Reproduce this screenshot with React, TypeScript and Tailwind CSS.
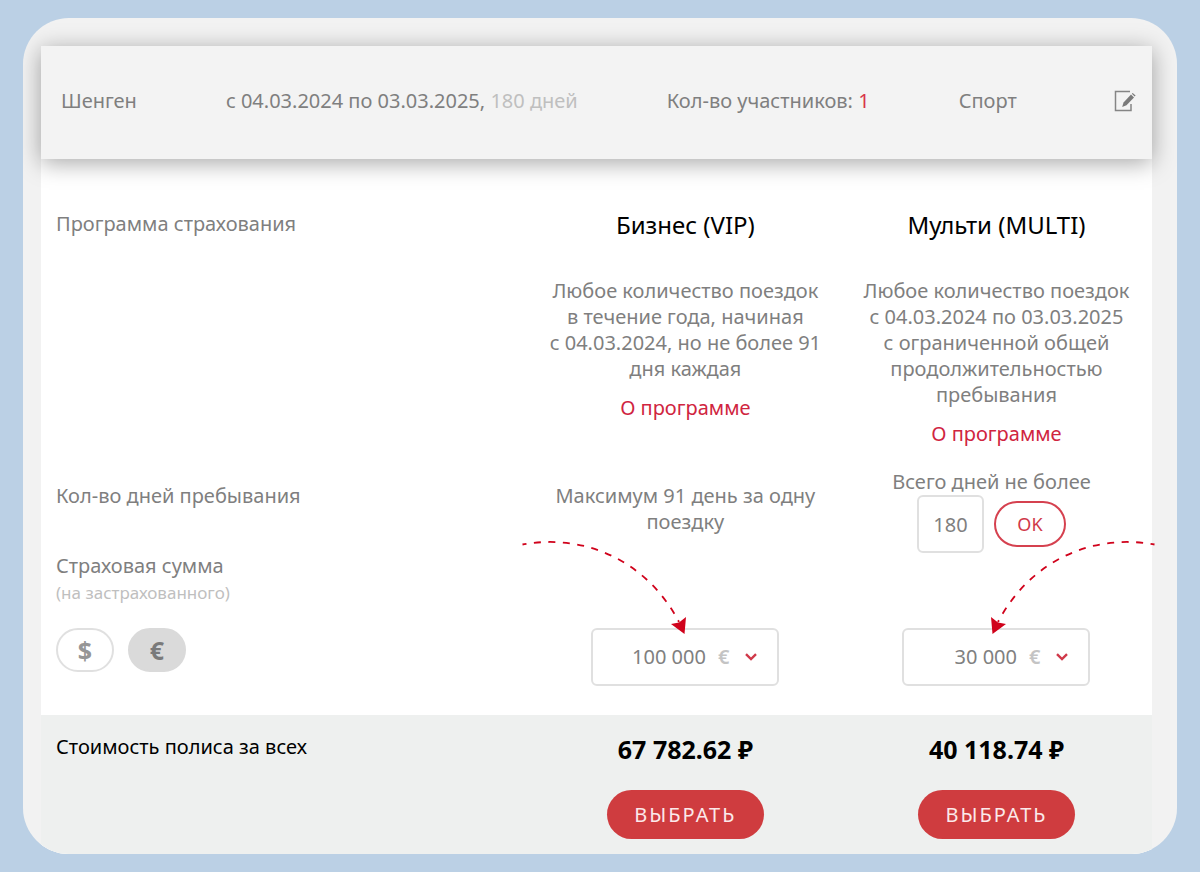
import React, { useState } from 'react';

type Currency = '$' | '€';

const CURRENCIES: Currency[] = ['$', '€'];

const EditIcon: React.FC = () => (
  <svg width="22" height="22" viewBox="0 0 22 22" fill="none" aria-hidden="true">
    <path d="M16 1.5H1.500v19h15.500V14" stroke="#858585" strokeWidth="1.500" />
    <path d="M17 4.500l3 3-7.500 7.700-4.300 1.800 1.300-4.500z" fill="#7a7a7a" />
    <path d="M17.800 3.700l.9-.8 2.900 2.700-.9 1z" fill="#7a7a7a" />
  </svg>
);

const Chevron: React.FC = () => (
  <svg width="12" height="8" viewBox="0 0 12 8" fill="none" aria-hidden="true">
    <path d="M1 1.200l5 4.800 5-4.800" stroke="#d0394a" strokeWidth="2.400" />
  </svg>
);

const ArrowRight: React.FC = () => (
  <svg width="164" height="96" viewBox="0 0 164 96" fill="none" aria-hidden="true" className="overflow-visible">
    <path d="M1.500 5.500C64 -6 126 22 158 83" stroke="#d0021b" strokeWidth="1.800" strokeDasharray="7 7.500" strokeDashoffset="3" />
    <path d="M163.500 95L150 85l8-1.500L165 78z" fill="#d0021b" />
  </svg>
);

const ArrowLeft: React.FC = () => (
  <svg width="168" height="96" viewBox="0 0 168 96" fill="none" aria-hidden="true">
    <path d="M166.500 5.500C104 -6 42 22 10 83" stroke="#d0021b" strokeWidth="1.800" strokeDasharray="7 7.500" strokeDashoffset="3" />
    <path d="M4.500 95L18 85l-8-1.500L3 78z" fill="#d0021b" />
  </svg>
);

interface SumSelectProps {
  label: string;
  currency: Currency;
  initial: string;
}

const SumSelect: React.FC<SumSelectProps> = ({ label, currency, initial }) => {
  const [value, setValue] = useState(initial);
  return (
    <div className="mx-auto flex h-[58px] w-[188px] items-center justify-end rounded-md border-2 border-[#e0e0e0] bg-white pr-5">
      <select
        aria-label={label}
        value={value}
        onChange={(e) => setValue(e.target.value)}
        className="field-sizing-content cursor-pointer appearance-none bg-transparent text-[#808080] outline-none"
      >
        <option>30 000</option>
        <option>50 000</option>
        <option>100 000</option>
      </select>
      <span className="ml-3 font-semibold text-[#c4c4c4]">{currency}</span>
      <span className="ml-4">
        <Chevron />
      </span>
    </div>
  );
};

const ChooseButton: React.FC = () => (
  <button className="mt-7 h-[49px] w-[157px] cursor-pointer rounded-full bg-[#cf3c3f] tracking-widest text-[#fbe9ea] uppercase">
    Выбрать
  </button>
);

export default function App() {
  const [currency, setCurrency] = useState<Currency>('€');
  const [days, setDays] = useState('180');

  return (
    <div className="min-h-screen bg-[#bbd0e5] px-[23px] py-[18px] font-['Noto_Sans',sans-serif] text-xl leading-[26px] text-[#7f7f7f]">
      <main className="overflow-hidden rounded-[46px] bg-[#f2f2f2] pt-7 pr-[25px] pl-[18px]">
        {/* Trip summary */}
        <header className="relative z-10 flex min-h-[113px] items-center gap-x-[89px] bg-[#f3f3f3] pr-4 pb-[3px] pl-5 shadow-[0_4px_22px_rgba(0,0,0,0.35)]">
          <span>Шенген</span>
          <span>
            с 04.03.2024 по 03.03.2025, <span className="text-[#bfbfbf]">180 дней</span>
          </span>
          <span>
            Кол-во участников: <span className="text-[#d8354a]">1</span>
          </span>
          <span>Спорт</span>
          <button aria-label="Изменить" className="ml-auto cursor-pointer">
            <EditIcon />
          </button>
        </header>

        <table className="w-full table-fixed bg-white text-center">
          <colgroup>
            <col className="w-[44%]" />
            <col className="w-[28%]" />
            <col className="w-[28%]" />
          </colgroup>
          <thead>
            <tr className="align-top">
              <th scope="col" className="pt-[52px] pb-[41px] pl-[15px] text-left font-normal">Программа страхования</th>
              <th scope="col" className="pt-[53px] text-2xl leading-[26px] font-normal text-black">Бизнес (VIP)</th>
              <th scope="col" className="pt-[53px] text-2xl leading-[26px] font-normal text-black">Мульти (MULTI)</th>
            </tr>
          </thead>
          <tbody className="align-top">
            <tr>
              <td />
              <td>
                <p>
                  Любое количество поездок
                  <br />в течение года, начиная
                  <br />с 04.03.2024, но не более 91
                  <br />дня каждая
                </p>
                <a href="#business" className="mt-[13px] inline-block text-[#d0253f]">О программе</a>
              </td>
              <td>
                <p>
                  Любое количество поездок
                  <br />с 04.03.2024 по 03.03.2025
                  <br />с ограниченной общей
                  <br />продолжительностью
                  <br />пребывания
                </p>
                <a href="#multi" className="mt-[13px] inline-block text-[#d0253f]">О программе</a>
              </td>
            </tr>
            <tr>
              <th scope="row" className="pt-9 pl-[15px] text-left font-normal">Кол-во дней пребывания</th>
              <td className="pt-9">
                Максимум 91 день за одну
                <br />
                поездку
              </td>
              <td className="pt-[22px] pr-2.5">
                <label htmlFor="days" className="block">Всего дней не более</label>
                <div className="flex items-center justify-center gap-2.5">
                  <input
                    id="days"
                    type="text"
                    value={days}
                    onChange={(e) => setDays(e.target.value)}
                    className="h-[58px] w-[67px] rounded-md border-2 border-[#e0e0e0] text-center outline-none"
                  />
                  <button className="h-[46px] w-[72px] cursor-pointer rounded-full border-2 border-[#d5414f] text-lg text-[#d0394a]">
                    OK
                  </button>
                </div>
              </td>
            </tr>
            <tr>
              <th scope="row" className="pl-[15px] text-left font-normal">
                Страховая сумма
                <small className="block text-[17px] leading-7 text-[#bfbfbf]">(на застрахованного)</small>
                <div className="mt-[21px] flex gap-3.5">
                  {CURRENCIES.map((c) => (
                    <button
                      key={c}
                      onClick={() => setCurrency(c)}
                      aria-pressed={currency === c}
                      className={`h-11 w-[58px] cursor-pointer rounded-full border-2 text-[25px] font-bold ${
                        currency === c
                          ? 'border-[#dadada] bg-[#dadada] text-[#7a7a7a]'
                          : 'border-[#e0e0e0] bg-white text-[#969696]'
                      }`}
                    >
                      {c}
                    </button>
                  ))}
                </div>
              </th>
              <td className="relative pt-[75px] pb-[29px]">
                <div className="pointer-events-none absolute top-[-14px] right-1/2">
                  <ArrowRight />
                </div>
                <SumSelect label="Страховая сумма, Бизнес" currency={currency} initial="100 000" />
              </td>
              <td className="relative pt-[75px] pb-[29px]">
                <div className="pointer-events-none absolute top-[-14px] left-[calc(50%-8px)]">
                  <ArrowLeft />
                </div>
                <SumSelect label="Страховая сумма, Мульти" currency={currency} initial="30 000" />
              </td>
            </tr>
          </tbody>
          <tfoot className="bg-[#eef0ef] align-top text-black">
            <tr>
              <th scope="row" className="pt-[19px] pl-[15px] text-left font-normal">Стоимость полиса за всех</th>
              <td className="pt-[21px] pb-[15px]">
                <p className="text-[25px] leading-[26px] font-bold">67 782.62 ₽</p>
                <ChooseButton />
              </td>
              <td className="pt-[21px] pb-[15px]">
                <p className="text-[25px] leading-[26px] font-bold">40 118.74 ₽</p>
                <ChooseButton />
              </td>
            </tr>
          </tfoot>
        </table>
      </main>
    </div>
  );
}
